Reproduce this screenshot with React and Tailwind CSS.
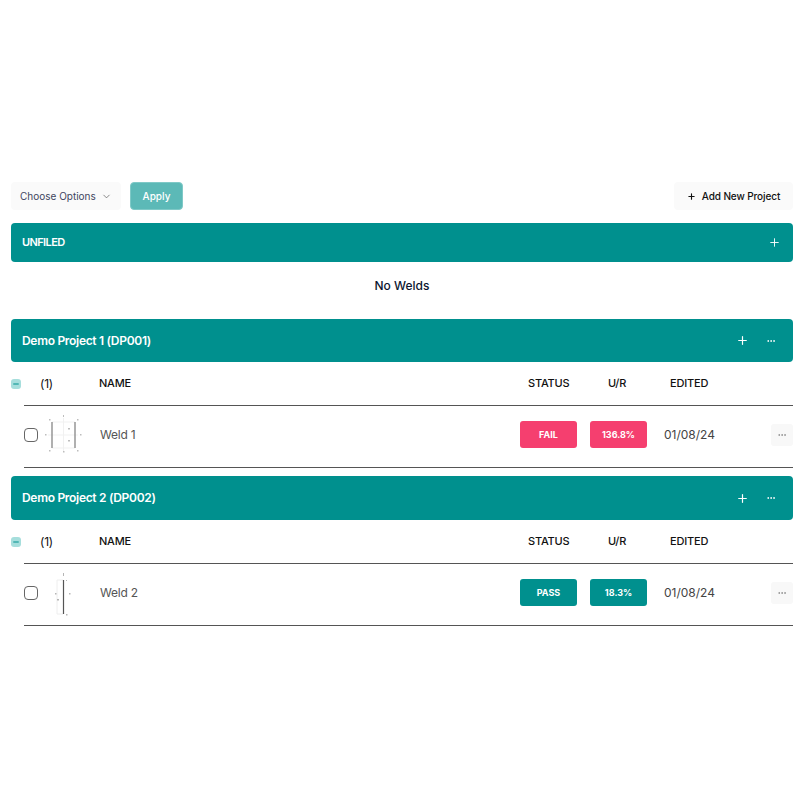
import { Plus, ChevronDown, Minus, MoreHorizontal } from "lucide-react";

const projects = [
  {
    title: "Demo Project 1 (DP001)",
    weld: "Weld 1",
    status: "FAIL",
    ur: "136.8%",
    color: "bg-[#f53f6f]",
    headerHeight: "h-[43px]",
    double: true,
  },
  {
    title: "Demo Project 2 (DP002)",
    weld: "Weld 2",
    status: "PASS",
    ur: "18.3%",
    color: "bg-[#00908e]",
    headerHeight: "h-[44px]",
    double: false,
  },
];

function WeldSketch({ double }) {
  if (!double) {
    return (
      <svg width="50" height="50" viewBox="0 0 50 50" className="shrink-0">
        <path d="M17 12h6M17 12v34M17 46h6" stroke="#eeeeee" strokeWidth="1" fill="none" />
        <path d="M23.5 12v34" stroke="#555" strokeWidth="1.2" />
        <g fill="#b5b5b5">
          <rect x="23" y="5" width="1" height="3" />
          <rect x="26" y="12" width="1" height="1" />
          <rect x="15" y="25" width="1.5" height="1.5" />
          <rect x="29" y="25" width="1.5" height="1.5" />
          <rect x="17" y="31" width="2" height="1.5" />
          <rect x="26" y="46" width="1.5" height="1.5" />
        </g>
      </svg>
    );
  }
  return (
    <svg width="50" height="50" viewBox="0 0 50 50" className="shrink-0">
      <path d="M12 12h23M12 38h23M23.5 8v34M8 25h30" stroke="#f1f1f1" strokeWidth="1" fill="none" />
      <path d="M12 12v26M35 12v26" stroke="#8f8f8f" strokeWidth="1.4" />
      <g fill="#bdbdbd">
        <rect x="9" y="9" width="1.5" height="1.5" />
        <rect x="23" y="5" width="1" height="2" />
        <rect x="37" y="9" width="1.5" height="1.5" />
        <rect x="5" y="24" width="1.5" height="1.5" />
        <rect x="40" y="24" width="1.5" height="1.5" />
        <rect x="28" y="18" width="2" height="1.5" />
        <rect x="28" y="30" width="2" height="1.5" />
        <rect x="9" y="40" width="1.5" height="1.5" />
        <rect x="23" y="41" width="1.5" height="1.5" />
        <rect x="37" y="40" width="1.5" height="1.5" />
      </g>
    </svg>
  );
}

function Project({ project }) {
  return (
    <div>
      <div className={`flex ${project.headerHeight} items-center justify-between rounded-[4px] bg-[#00908e] pl-[11px] pr-[17px] text-white`}>
        <span className="text-[12px] font-semibold tracking-[-0.3px]">{project.title}</span>
        <div className="flex items-center gap-[17px]">
          <Plus className="h-[13px] w-[13px]" strokeWidth={2.2} />
          <MoreHorizontal className="h-[10px] w-[10px]" strokeWidth={2.4} />
        </div>
      </div>

      <div className="ml-[13px] flex h-[44px] items-center border-b border-[#555] text-[11px] font-medium tracking-[-0.2px] text-[#111]">
        <span className="-ml-[13px] flex h-[10px] w-[10px] items-center justify-center rounded-[3px] bg-[#a6dedc]">
          <Minus className="h-[8px] w-[8px] text-[#00908e]" strokeWidth={3} />
        </span>
        <span className="ml-[19px] w-[59px] text-[12px] font-normal">(1)</span>
        <span className="w-[429px]">NAME</span>
        <span className="w-[80px]">STATUS</span>
        <span className="w-[62px]">U/R</span>
        <span>EDITED</span>
      </div>

      <div className="ml-[13px] flex h-[62px] items-center border-b border-[#555] pb-[4px]">
        <span className="h-[14px] w-[14px] shrink-0 rounded-[4px] border border-[#666]" />
        <div className="ml-[2px] flex w-[60px] shrink-0 items-center">
          <WeldSketch double={project.double} />
        </div>
        <span className="w-[420px] text-[12px] tracking-[-0.2px] text-[#555]">{project.weld}</span>
        <span className={`flex h-[27px] w-[57px] items-center justify-center rounded-[3px] ${project.color} text-[9px] font-bold text-white`}>
          {project.status}
        </span>
        <span className={`ml-[13px] flex h-[27px] w-[57px] items-center justify-center rounded-[3px] ${project.color} text-[9px] font-bold text-white`}>
          {project.ur}
        </span>
        <span className="ml-[17px] text-[12px] text-[#444]">01/08/24</span>
        <span className="ml-auto flex h-[22px] w-[22px] items-center justify-center rounded-[3px] bg-[#f8f8f8]">
          <MoreHorizontal className="h-[10px] w-[10px] text-[#888]" strokeWidth={2} />
        </span>
      </div>
    </div>
  );
}

export default function App() {
  return (
    <div className="min-h-[806px] w-[806px] bg-white pl-[11px] pr-[13px] pt-[182px] font-['Inter',sans-serif]">
      <div className="flex h-[28px] items-center">
        <button className="flex h-[28px] w-[110px] items-center rounded-[4px] bg-[#fafafa] pl-[9px] text-[10px] text-[#3f4660]">
          Choose Options
          <ChevronDown className="ml-[5px] h-[11px] w-[11px] text-[#555]" strokeWidth={1.5} />
        </button>
        <button className="ml-[9px] h-[28px] w-[53px] rounded-[4px] border border-[#7fc9c7] bg-[#5cb9b7] text-[10px] font-medium text-white">
          Apply
        </button>
        <button className="ml-auto flex h-[28px] w-[119px] items-center justify-center gap-[6px] rounded-[4px] bg-[#fafafa] text-[10px] font-medium tracking-[-0.1px] text-[#111]">
          <Plus className="h-[9px] w-[9px]" strokeWidth={3} />
          Add New Project
        </button>
      </div>

      <div className="mt-[13px] flex h-[39px] items-center justify-between rounded-[4px] bg-[#00908e] pl-[11px] pr-[12px] text-white">
        <span className="text-[11px] font-semibold tracking-[-0.6px]">UNFILED</span>
        <Plus className="h-[13px] w-[13px]" strokeWidth={1.7} />
      </div>

      <div className="flex h-[57px] items-center justify-center pb-[9px] text-[12px] font-medium text-[#0b1530]">
        No Welds
      </div>

      <div className="flex flex-col gap-[8px]">
        {projects.map((project) => (
          <Project key={project.title} project={project} />
        ))}
      </div>
    </div>
  );
}
